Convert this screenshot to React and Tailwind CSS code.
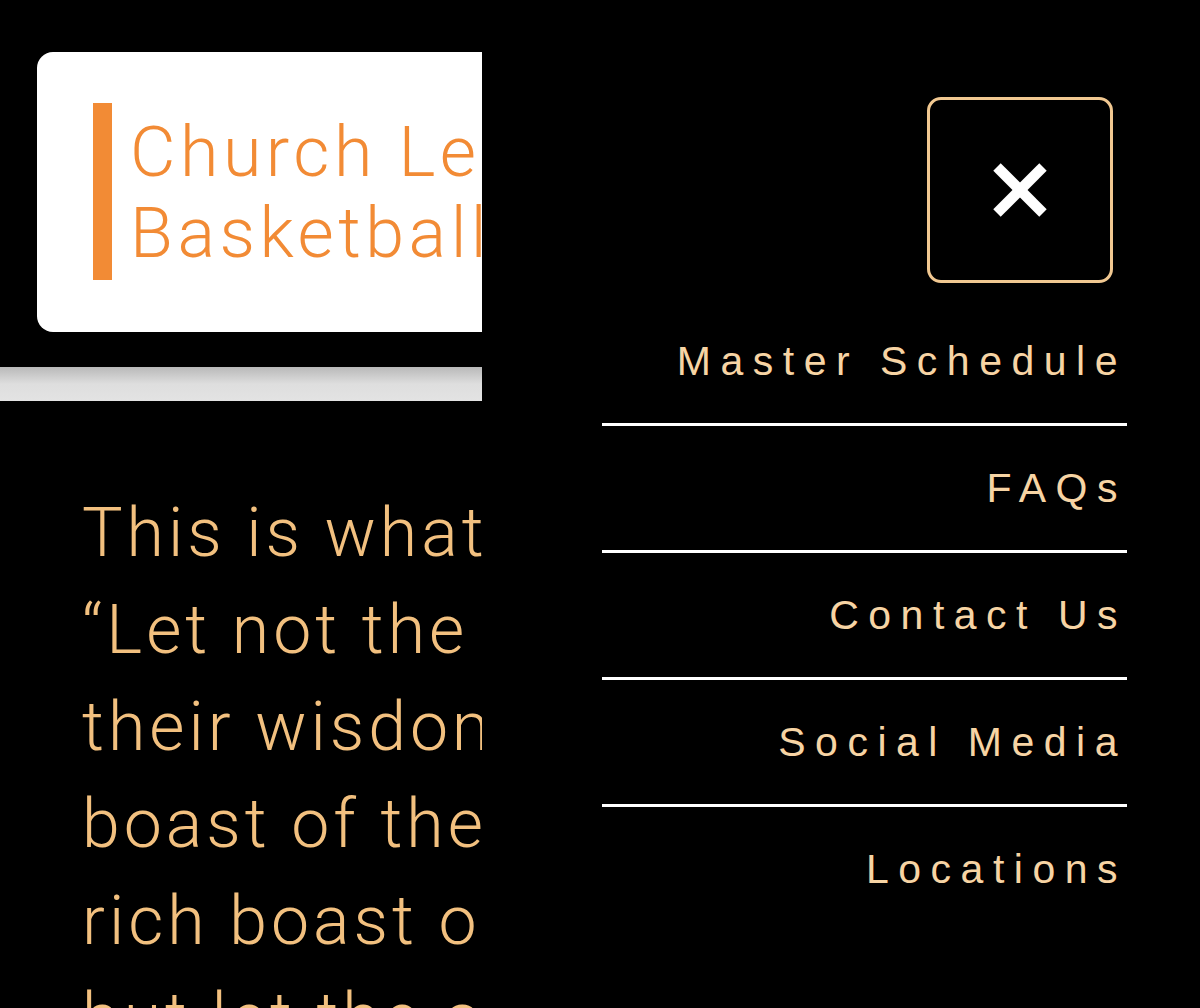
import React from "react";

const bodyLines = [
  "This is what the Lord says:",
  "“Let not the wise boast of",
  "their wisdom or the strong",
  "boast of their strength or the",
  "rich boast of their riches,",
  "but let the one who boasts",
];

const menu = ["Master Schedule", "FAQs", "Contact Us", "Social Media", "Locations"];

export default function App() {
  return (
    <div className="w-[1200px] h-[1008px] bg-black flex overflow-hidden">
      {/* left: page behind the drawer */}
      <div className="w-[482px] shrink-0 h-full overflow-hidden flex flex-col">
        <div className="ml-[37px] mt-[52px] h-[280px] w-[700px] shrink-0 bg-white rounded-l-[16px] flex items-start pl-[56px] pt-[51px]">
          <div className="w-[19px] h-[177px] bg-[#f28b35] shrink-0" />
          <div
            className="ml-[18px] mt-[9px] text-[70px] leading-[81px] text-[#f28b35] font-light tracking-[4.5px] whitespace-nowrap"
            style={{ fontFamily: "Roboto, sans-serif" }}
          >
            <div>Church League</div>
            <div>Basketball</div>
          </div>
        </div>
        <div className="mt-[35px] h-[34px] w-full shrink-0 bg-gradient-to-b from-[#b9b9b9] via-[#dedede] to-[#e3e3e3]" />
        <div
          className="mt-[84px] ml-[82px] text-[68px] leading-[97px] text-[#f2c07f] font-light tracking-[4px] whitespace-nowrap"
          style={{ fontFamily: "Roboto, sans-serif" }}
        >
          {bodyLines.map((l) => (
            <div key={l}>{l}</div>
          ))}
        </div>
      </div>

      {/* right: menu drawer */}
      <div className="flex-1 h-full flex flex-col">
        <button className="self-end mr-[87px] mt-[97px] w-[186px] h-[186px] border-[3px] border-[#f1c891] rounded-[14px] flex items-center justify-center bg-black">
          <svg width="54" height="54" viewBox="0 0 54 54">
            <line x1="4" y1="4" x2="50" y2="50" stroke="white" strokeWidth="10.5" />
            <line x1="50" y1="4" x2="4" y2="50" stroke="white" strokeWidth="10.5" />
          </svg>
        </button>
        <div
          className="mt-[16px] ml-[120px] mr-[73px] flex flex-col"
          style={{ fontFamily: "'Liberation Sans', Arial, sans-serif" }}
        >
          {menu.map((m, i) => (
            <div
              key={m}
              className={
                i < menu.length - 1
                  ? "pt-[42px] pb-[41px] border-b-[3px] border-white text-right"
                  : "pt-[42px] pb-[41px] text-right"
              }
            >
              <div className="text-[41px] leading-[41px] tracking-[9.5px] text-[#f7d4a4] whitespace-nowrap">
                {m}
              </div>
            </div>
          ))}
        </div>
      </div>
    </div>
  );
}
